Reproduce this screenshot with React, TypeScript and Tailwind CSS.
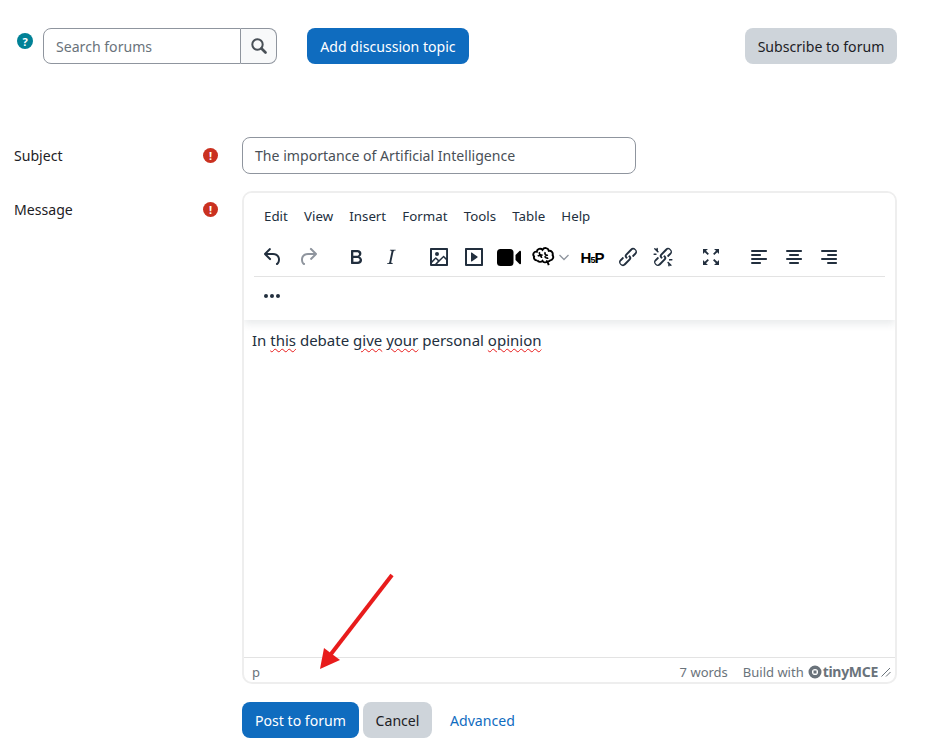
import type { ReactNode } from "react";

const icons = {
  undo: "M6.4 8H12c3.7 0 6.2 2 6.8 5.1.6 2.7-.4 5.6-2.3 6.8a1 1 0 0 1-1-1.8c1.1-.6 1.8-2.7 1.4-4.6-.5-2.1-2.1-3.5-4.9-3.5H6.4l3.3 3.3a1 1 0 1 1-1.4 1.4l-5-5a1 1 0 0 1 0-1.4l5-5a1 1 0 0 1 1.4 1.4L6.4 8Z",
  redo: "M17.6 10H12c-2.8 0-4.4 1.4-4.9 3.5-.4 2 .3 4 1.4 4.6a1 1 0 1 1-1 1.8c-2-1.2-2.9-4.1-2.3-6.8.6-3 3-5.1 6.8-5.1h5.6l-3.3-3.3a1 1 0 1 1 1.4-1.4l5 5a1 1 0 0 1 0 1.4l-5 5a1 1 0 0 1-1.4-1.4l3.3-3.3Z",
  bold: "M7.8 19c-.3 0-.5 0-.6-.2l-.2-.5V5.7c0-.2 0-.4.2-.5l.6-.2h5c1.5 0 2.7.3 3.5 1 .7.6 1.1 1.4 1.1 2.5a3 3 0 0 1-.6 1.9c-.4.6-1 1-1.6 1.2.4.1.9.3 1.3.6s.8.7 1 1.2c.4.4.5 1 .5 1.6 0 1.3-.4 2.3-1.3 3-.8.7-2.1 1-3.8 1H7.8Zm5-8.3c.6 0 1.2-.1 1.6-.5.4-.3.6-.7.6-1.3 0-1.1-.8-1.7-2.3-1.7H9.3v3.5h3.4Zm.5 6c.7 0 1.3-.1 1.7-.4.4-.4.6-.9.6-1.5s-.2-1-.7-1.4c-.4-.3-1-.4-2-.4H9.4v3.8h4Z",
  italic: "M16.7 4.7l-.1.9h-.3c-.6 0-1 0-1.4.3-.3.3-.4.6-.5 1.1l-2.1 9.8v.6c0 .5.4.8 1.4.8h.2l-.2.8H8l.2-.8h.2c1.1 0 1.8-.5 2-1.5l2-9.8.1-.5c0-.6-.4-.8-1.4-.8h-.3l.2-.9h5.8Z",
  image: "M5 15.7l3.3-3.2c.3-.3.7-.3 1 0L12 15l4.1-4c.3-.4.8-.4 1 0l2 1.9V5H5v10.7ZM5 18V19h3l2.8-2.9-2-2L5 17.9Zm14-3l-2.5-2.4-6.4 6.5H19v-4ZM4 3h16c.6 0 1 .4 1 1v16c0 .6-.4 1-1 1H4a1 1 0 0 1-1-1V4c0-.6.4-1 1-1Zm6 8a2 2 0 1 0 0-4 2 2 0 0 0 0 4Z",
  media: "M4 3h16c.6 0 1 .4 1 1v16c0 .6-.4 1-1 1H4a1 1 0 0 1-1-1V4c0-.6.4-1 1-1Zm1 2v14h14V5H5Zm4.8 2.6l5.6 4a.5.5 0 0 1 0 .8l-5.6 4A.5.5 0 0 1 9 16V8a.5.5 0 0 1 .8-.4Z",
  link: "M6.2 12.3a1 1 0 0 1 1.4 1.4l-2 2a2 2 0 1 0 2.6 2.8l4.8-4.8a1 1 0 0 0 0-1.4 1 1 0 1 1 1.4-1.3 2.9 2.9 0 0 1 0 4L9.6 20a3.9 3.9 0 0 1-5.5-5.5l2-2Zm11.6-.6a1 1 0 0 1-1.4-1.4l2-2a2 2 0 1 0-2.6-2.8L11 10.3a1 1 0 0 0 0 1.4A1 1 0 1 1 9.6 13a2.9 2.9 0 0 1 0-4L14.4 4a3.9 3.9 0 0 1 5.5 5.5l-2 2Z",
  unlink: "M6.2 12.3a1 1 0 0 1 1.4 1.4l-2.1 2a2 2 0 1 0 2.7 2.8l4.8-4.8a1 1 0 0 0 0-1.4 1 1 0 1 1 1.4-1.3 2.9 2.9 0 0 1 0 4l-4.8 4.9a3.9 3.9 0 0 1-5.5-5.5l2-2Zm11.6-.6a1 1 0 0 1-1.4-1.4l2.1-2a2 2 0 1 0-2.7-2.8L11 10.3a1 1 0 0 0 0 1.4A1 1 0 1 1 9.6 13a2.9 2.9 0 0 1 0-4L14.4 4a3.9 3.9 0 0 1 5.5 5.5l-2 2ZM7.6 6.3a.8.8 0 0 1-1 1.1L3.3 4.2a.7.7 0 1 1 1-1l3.2 3.1ZM5.1 8.6a.8.8 0 0 1 0 1.5H3a.8.8 0 0 1 0-1.5H5Zm1-5.9c.4 0 .8.3.8.7V5a.8.8 0 1 1-1.5 0V3.4c0-.4.3-.7.7-.7Zm10.3 15.1a.8.8 0 0 1 1-1l3.2 3.2a.8.8 0 0 1-1 1L16.4 18ZM19 15.6a.8.8 0 1 1 0-1.5H21a.8.8 0 0 1 0 1.5h-2Zm-1 5.9a.8.8 0 0 1-.8-.7v-2.1a.8.8 0 0 1 1.5 0v2.1c0 .4-.3.7-.7.7Z",
  fullscreen: "m15.3 10-1.2-1.3 2.9-3L15 4h5v5l-1.7-1.7-3 2.7Zm-6.6 0-3-2.7L4 9V4h5L7 5.7l2.9 3L8.7 10Zm6.6 4 3 2.7L20 15v5h-5l1.9-1.7-2.9-3 1.3-1.3Zm-6.6 0 1.2 1.3-2.9 3L9 20H4v-5l1.7 1.7 3-2.7Z",
  left: "M5 5h14c.6 0 1 .4 1 1s-.4 1-1 1H5a1 1 0 1 1 0-2Zm0 4h8c.6 0 1 .4 1 1s-.4 1-1 1H5a1 1 0 1 1 0-2Zm0 8h8c.6 0 1 .4 1 1s-.4 1-1 1H5a1 1 0 0 1 0-2Zm0-4h14c.6 0 1 .4 1 1s-.4 1-1 1H5a1 1 0 0 1 0-2Z",
  center: "M5 5h14c.6 0 1 .4 1 1s-.4 1-1 1H5a1 1 0 1 1 0-2Zm3 4h8c.6 0 1 .4 1 1s-.4 1-1 1H8a1 1 0 1 1 0-2Zm0 8h8c.6 0 1 .4 1 1s-.4 1-1 1H8a1 1 0 0 1 0-2Zm-3-4h14c.6 0 1 .4 1 1s-.4 1-1 1H5a1 1 0 0 1 0-2Z",
  right: "M5 5h14c.6 0 1 .4 1 1s-.4 1-1 1H5a1 1 0 1 1 0-2Zm6 4h8c.6 0 1 .4 1 1s-.4 1-1 1h-8a1 1 0 0 1 0-2Zm0 8h8c.6 0 1 .4 1 1s-.4 1-1 1h-8a1 1 0 0 1 0-2Zm-6-4h14c.6 0 1 .4 1 1s-.4 1-1 1H5a1 1 0 0 1 0-2Z",
  more: "M6 10a2 2 0 0 0-2 2c0 1.1.9 2 2 2a2 2 0 0 0 2-2 2 2 0 0 0-2-2Zm12 0a2 2 0 0 0-2 2c0 1.1.9 2 2 2a2 2 0 0 0 2-2 2 2 0 0 0-2-2Zm-6 0a2 2 0 0 0-2 2c0 1.1.9 2 2 2a2 2 0 0 0 2-2 2 2 0 0 0-2-2Z",
};

function Tool({ d, muted }: { d: string; muted?: boolean }) {
  return (
    <span className="flex h-[34px] w-[34px] mr-px items-center justify-center">
      <svg width="24" height="24" viewBox="0 0 24 24" className={muted ? "fill-[#8f959e]" : "fill-[#222f3e]"}>
        <path d={d} />
      </svg>
    </span>
  );
}

function Slot({ children, className = "w-[34px]" }: { children: ReactNode; className?: string }) {
  return <span className={`flex h-[34px] mr-px items-center justify-center ${className}`}>{children}</span>;
}

function Required() {
  return (
    <span className="flex h-[15px] w-[15px] items-center justify-center rounded-full bg-[#ca3120] text-[11px] leading-none font-bold text-white">
      !
    </span>
  );
}

function Spell({ children }: { children: ReactNode }) {
  return <span className="underline decoration-[#e81c1c] decoration-wavy decoration-1 underline-offset-2">{children}</span>;
}

const menus = ["Edit", "View", "Insert", "Format", "Tools", "Table", "Help"];

export default function App() {
  return (
    <div className="relative h-[750px] overflow-hidden bg-white text-[14.1px] leading-[22px] text-[#1d2125] [font-family:'Noto_Sans',sans-serif]">
      {/* Forum actions */}
      <div className="flex items-start pt-[28px] pl-[17px]">
        <span className="mt-[5px] flex h-4 w-4 items-center justify-center rounded-full bg-[#008196] text-[11px] leading-none font-bold text-white">
          ?
        </span>
        <div className="ml-[10px] flex h-9 w-[234px]">
          <div className="flex flex-1 items-center rounded-l-lg border border-[#8f959e] pt-px pl-3 text-[#6a737b]">Search forums</div>
          <div className="flex w-[36px] items-center justify-center rounded-r-lg border border-l-0 border-[#8f959e] bg-[#f8f9fa]">
            <svg width="16" height="16" viewBox="0 0 16 16" fill="none" stroke="#495057">
              <circle cx="6.500" cy="6.500" r="5.200" strokeWidth="2" />
              <path d="M10.500 10.500 14.500 14.500" strokeWidth="2.600" strokeLinecap="round" />
            </svg>
          </div>
        </div>
        <div className="ml-[30px] flex h-9 w-[162px] items-center justify-center rounded-lg bg-[#0f6cbf] pt-px text-white">Add discussion topic</div>
        <div className="ml-[276px] flex h-9 w-[152px] items-center justify-center rounded-lg bg-[#ced4da] pt-px">Subscribe to forum</div>
      </div>

      {/* Subject */}
      <div className="mt-[73px] flex items-center pl-[14px]">
        <span className="w-[189px]">Subject</span>
        <span className="w-[39px]"><Required /></span>
        <div className="flex h-[37px] w-[394px] items-center rounded-lg border border-[#8f959e] px-3 text-[#495057]">
          The importance of Artificial Intelligence
        </div>
      </div>

      {/* Message */}
      <div className="mt-[17px] flex items-start pl-[14px]">
        <span className="mt-[8px] w-[189px]">Message</span>
        <span className="mt-[11px] w-[39px]"><Required /></span>
        <div className="flex h-[493px] w-[655px] flex-col overflow-hidden rounded-[10px] border-2 border-[#eeeeee]">
          <div className="z-10 h-[127px] shrink-0 bg-white px-[10px] shadow-[0_4px_8px_rgba(34,47,62,0.1)]">
            <div className="flex h-[46px] items-center gap-[16.2px] pl-[10px] text-[13.3px] text-[#222f3e]">
              {menus.map((m) => (
                <span key={m}>{m}</span>
              ))}
            </div>
            <div className="flex h-[38px] items-center border-b border-[#e3e3e3] pb-[1px] pl-[2px]">
              <Tool d={icons.undo} />
              <Tool d={icons.redo} muted />
              <span className="w-[13px]" />
              <Tool d={icons.bold} />
              <Tool d={icons.italic} />
              <span className="w-[13px]" />
              <Tool d={icons.image} />
              <Tool d={icons.media} />
              <Slot>
                <svg width="24" height="17" viewBox="0 0 24 17" className="fill-black">
                  <rect x="0" y="0" width="16.500" height="17" rx="3.500" />
                  <path d="M18.500 6 22.500 2c.6-.5 1.500-.2 1.500.6v11.800c0 .8-.9 1.100-1.500.6l-4-4Z" />
                </svg>
              </Slot>
              <Slot className="w-[48px]">
                <svg width="23" height="20" viewBox="0 0 24 20" fill="none" stroke="#000" strokeWidth="2" className="-ml-[1px]">
                  <path d="M5.500 13.500A3 3 0 0 1 2.200 9.500 3 3 0 0 1 5 4.500 3.500 3.500 0 0 1 11 2.500 3.500 3.500 0 0 1 17.500 3.500 3.500 3.500 0 0 1 21.500 8 3.500 3.500 0 0 1 19 13.500 3 3 0 0 1 16 14.500L17.500 18.500" />
                  <path d="M5.500 13.500A3.500 3.500 0 0 0 11 14 3 3 0 0 0 16 14.500" />
                  <path d="M8 5a2 2 0 0 0 3 2.500M14 5a2 2 0 0 0 2.500 3M6 9a2.500 2.500 0 0 1 4 2M13.500 9a2.500 2.500 0 0 0 3.500 2" strokeWidth="1.700" />
                </svg>
                <svg width="12" height="12" viewBox="0 0 12 12" fill="none" stroke="#8f959e" strokeWidth="1.300" className="ml-[3px]">
                  <path d="m1.500 4 4.500 4.500L10.500 4" />
                </svg>
              </Slot>
              <Slot>
                <span className="-ml-[1px] flex items-baseline text-[15px] leading-none font-bold text-black [font-family:'Liberation_Sans',sans-serif]">
                  <span>H</span>
                  <span className="-mx-[1px] text-[9px]">5</span>
                  <span>P</span>
                </span>
              </Slot>
              <Tool d={icons.link} />
              <Tool d={icons.unlink} />
              <span className="w-[13px]" />
              <Tool d={icons.fullscreen} />
              <span className="w-[13px]" />
              <Tool d={icons.left} />
              <Tool d={icons.center} />
              <Tool d={icons.right} />
            </div>
            <div className="-mt-[1px] flex h-[39px] items-center pl-[1px]">
              <Tool d={icons.more} />
            </div>
          </div>
          <div className="flex-1 px-[8px] pt-[9px] text-[15px] text-[#222f3e]">
            In <Spell>this</Spell> debate <Spell>give</Spell> <Spell>your</Spell> personal <Spell>opinion</Spell>
          </div>
          <div className="flex h-[25px] shrink-0 items-center border-t border-[#e3e3e3] pt-[3px] pr-[3px] pl-[8px] text-[13px] text-[#6a737b]">
            <span className="flex-1">p</span>
            <span>7 words</span>
            <span className="ml-[15px]">Build with</span>
            <svg width="14" height="14" viewBox="0 0 14 14" fill="none" className="mr-[1px] ml-[4px]">
              <circle cx="7" cy="7" r="4.800" stroke="#6a737b" strokeWidth="3.400" />
              <rect x="5.500" y="5.500" width="3" height="3" fill="#6a737b" />
            </svg>
            <span className="text-[14px] font-bold tracking-[-0.3px]">tinyMCE</span>
            <svg width="12" height="12" viewBox="0 0 12 12" fill="none" stroke="#6a737b" className="ml-[2px]">
              <path d="M1.500 10.500 10 2M6 10.500 10.500 6" />
            </svg>
          </div>
        </div>
      </div>

      {/* Form buttons */}
      <div className="mt-[18px] flex items-center pl-[242px]">
        <div className="flex h-9 w-[117px] items-center justify-center rounded-lg bg-[#0f6cbf] pt-px text-white">Post to forum</div>
        <div className="ml-[4px] flex h-9 w-[69px] items-center justify-center rounded-lg bg-[#ced4da] pt-px">Cancel</div>
        <a className="ml-[18px] pt-px text-[#0f6cbf]">Advanced</a>
      </div>

      {/* Annotation arrow */}
      <svg width="937" height="750" viewBox="0 0 937 750" className="pointer-events-none absolute top-0 left-0">
        <path d="M392 575 331 654" stroke="#e81c1c" strokeWidth="4" />
        <path d="M320 669 324 648 340 660Z" fill="#e81c1c" />
      </svg>
    </div>
  );
}
